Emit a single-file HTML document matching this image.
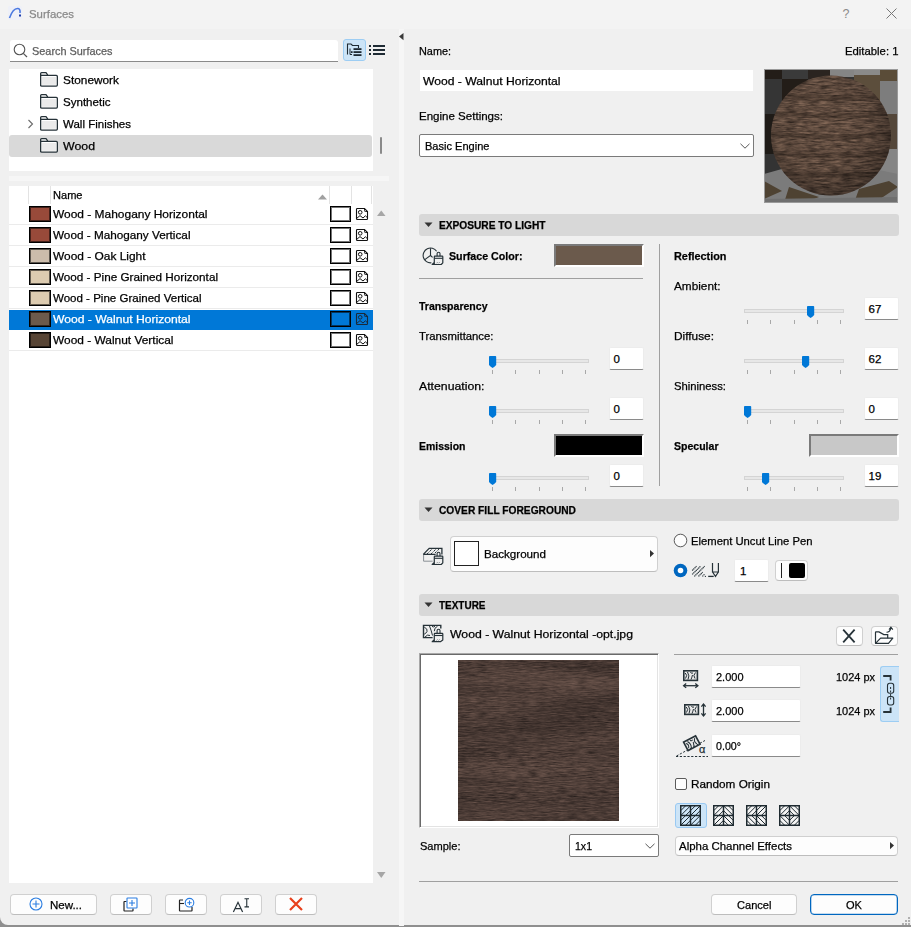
<!DOCTYPE html><html><head><meta charset="utf-8"><style>
*{box-sizing:border-box;margin:0;padding:0}
html,body{width:911px;height:927px;overflow:hidden;background:#8f8f8f}
body{position:relative;font-family:"Liberation Sans",sans-serif;font-size:11.5px;color:#000}
.a{position:absolute}
.t{position:absolute;white-space:nowrap;line-height:14px;height:14px;-webkit-text-stroke:0.25px currentColor}
.tb{-webkit-text-stroke:0.1px currentColor}
.fld{position:absolute;background:#fff;border:1px solid #ececec;border-bottom:1px solid #8a8a8a;border-radius:2px}
.sw{position:absolute;border-top:2px solid #7a7a7a;border-left:2px solid #7a7a7a;border-bottom:2px solid #fff;border-right:2px solid #fff}
.btn{position:absolute;background:#fdfdfd;border:1px solid #d0d0d0;border-bottom-color:#bdbdbd;border-radius:4px}
.track{position:absolute;height:4px;background:#e7e7e7;border:1px solid #d4d4d4}
.tick{position:absolute;width:1px;height:3px;background:#a8a8a8}
svg{position:absolute;overflow:visible}
</style></head><body>
<div class="a" style="left:0;top:0;width:911px;height:925px;background:#f0f0f0;border-radius:0 0 0 8px"></div>
<div class="a" style="left:0;top:0;width:911px;height:29px;background:#f3f3f3"></div>
<div class="a" style="left:8px;top:6px;width:14px;height:14px;background:#eef0f8;border-radius:2px"></div>
<svg style="left:8px;top:6px" width="14" height="14"><path d="M1.5 12 Q5 2 10 2.5 Q12.5 3 12 7" fill="none" stroke="#4a78e0" stroke-width="1.6"/><rect x="11" y="8.5" width="2" height="2" fill="#1f3fa8"/></svg>
<div class="t" style="left:28.50px;top:6.62px;font-size:11.5px;font-weight:normal;color:#8a8a8a;transform:scaleX(0.9914);transform-origin:0 0;">Surfaces</div>
<div class="t" style="left:842.50px;top:6.67px;font-size:12.5px;font-weight:normal;color:#8a8a8a;-webkit-text-stroke:0">?</div>
<svg style="left:886px;top:8px" width="11" height="11"><path d="M0.5 0.5 L10.5 10.5 M10.5 0.5 L0.5 10.5" stroke="#777" stroke-width="1"/></svg>
<div class="a" style="left:10px;top:40px;width:328px;height:22px;background:#fff;border-radius:3px 3px 0 0;border-bottom:1px solid #8a8a8a"></div>
<svg style="left:13px;top:43px" width="16" height="16"><circle cx="6.5" cy="6.5" r="5.3" fill="none" stroke="#555" stroke-width="1.1"/><path d="M10.3 10.3 L14 14" stroke="#555" stroke-width="1.2"/></svg>
<div class="t" style="left:31.50px;top:44.02px;font-size:11.5px;font-weight:normal;color:#5d5d5d;transform:scaleX(0.9469);transform-origin:0 0;">Search Surfaces</div>
<div class="a" style="left:343px;top:39px;width:23px;height:22px;background:#cce4f7;border:1px solid #9dcdf3;border-radius:3px"></div>
<svg style="left:346px;top:42px" width="18" height="16"><path d="M1.5 12.5 V2 H5 L6.5 3.5 H12.5 V6" fill="none" stroke="#1e2a33" stroke-width="1.1"/><path d="M4 6.5 V12.5 H6" fill="none" stroke="#1e2a33" stroke-width="1"/><rect x="7.5" y="6.2" width="8" height="1.8" fill="#1e2a33"/><rect x="7.5" y="9.2" width="8" height="1.8" fill="#1e2a33"/><rect x="7.5" y="12.2" width="8" height="1.8" fill="#1e2a33"/><rect x="5" y="9.2" width="1.6" height="1.8" fill="#1e2a33"/></svg>
<svg style="left:369px;top:44px" width="17" height="12"><rect x="0" y="1" width="2" height="2" fill="#1e2a33"/><rect x="4" y="1" width="12" height="2" fill="#1e2a33"/><rect x="0" y="5" width="2" height="2" fill="#1e2a33"/><rect x="4" y="5" width="12" height="2" fill="#1e2a33"/><rect x="0" y="9" width="2" height="2" fill="#1e2a33"/><rect x="4" y="9" width="12" height="2" fill="#1e2a33"/></svg>
<div class="a" style="left:9px;top:69px;width:364px;height:102px;background:#fff"></div>
<div class="a" style="left:9px;top:135px;width:363px;height:22px;background:#d9d9d9;border-radius:3px"></div>
<svg style="left:40px;top:72px" width="19" height="16"><path d="M0.65 14.15 V1.6 Q0.65 0.65 1.6 0.65 H6 L8 3.35 H16.3 Q17.35 3.35 17.35 4.4 V13.1 Q17.35 14.15 16.3 14.15 H1.6 Q0.65 14.15 0.65 13.1 Z" fill="#fff" stroke="#263238" stroke-width="1.3"/><path d="M0.65 3.35 H8" stroke="#263238" stroke-width="1.3"/><rect x="2" y="5" width="14" height="7.8" fill="#eaeaea"/></svg>
<div class="t" style="left:63.00px;top:73.32px;font-size:11.5px;font-weight:normal;color:#000;transform:scaleX(1.0305);transform-origin:0 0;">Stonework</div>
<svg style="left:40px;top:94px" width="19" height="16"><path d="M0.65 14.15 V1.6 Q0.65 0.65 1.6 0.65 H6 L8 3.35 H16.3 Q17.35 3.35 17.35 4.4 V13.1 Q17.35 14.15 16.3 14.15 H1.6 Q0.65 14.15 0.65 13.1 Z" fill="#fff" stroke="#263238" stroke-width="1.3"/><path d="M0.65 3.35 H8" stroke="#263238" stroke-width="1.3"/><rect x="2" y="5" width="14" height="7.8" fill="#eaeaea"/></svg>
<div class="t" style="left:63.00px;top:95.32px;font-size:11.5px;font-weight:normal;color:#000;transform:scaleX(1.0040);transform-origin:0 0;">Synthetic</div>
<svg style="left:40px;top:116px" width="19" height="16"><path d="M0.65 14.15 V1.6 Q0.65 0.65 1.6 0.65 H6 L8 3.35 H16.3 Q17.35 3.35 17.35 4.4 V13.1 Q17.35 14.15 16.3 14.15 H1.6 Q0.65 14.15 0.65 13.1 Z" fill="#fff" stroke="#263238" stroke-width="1.3"/><path d="M0.65 3.35 H8" stroke="#263238" stroke-width="1.3"/><rect x="2" y="5" width="14" height="7.8" fill="#eaeaea"/></svg>
<div class="t" style="left:63.00px;top:117.32px;font-size:11.5px;font-weight:normal;color:#000;transform:scaleX(1.0007);transform-origin:0 0;">Wall Finishes</div>
<svg style="left:40px;top:138px" width="19" height="16"><path d="M0.65 14.15 V1.6 Q0.65 0.65 1.6 0.65 H6 L8 3.35 H16.3 Q17.35 3.35 17.35 4.4 V13.1 Q17.35 14.15 16.3 14.15 H1.6 Q0.65 14.15 0.65 13.1 Z" fill="#fff" stroke="#263238" stroke-width="1.3"/><path d="M0.65 3.35 H8" stroke="#263238" stroke-width="1.3"/><rect x="2" y="5" width="14" height="7.8" fill="#eaeaea"/></svg>
<div class="t" style="left:63.00px;top:139.32px;font-size:11.5px;font-weight:normal;color:#000;transform:scaleX(1.0723);transform-origin:0 0;">Wood</div>
<svg style="left:27px;top:119px" width="8" height="10"><path d="M1.5 1 L5.5 5 L1.5 9" fill="none" stroke="#6a6a6a" stroke-width="1.1"/></svg>
<div class="a" style="left:380px;top:137px;width:2px;height:17px;background:#8a8a8a;border-radius:1px"></div>
<div class="a" style="left:9px;top:176px;width:380px;height:5px;background:#f6f6f6"></div>
<div class="a" style="left:9px;top:186px;width:364px;height:697px;background:#fff"></div>
<div class="a" style="left:28px;top:186px;width:1px;height:18px;background:#e3e3e3"></div>
<div class="a" style="left:50px;top:186px;width:1px;height:18px;background:#e3e3e3"></div>
<div class="a" style="left:329px;top:186px;width:1px;height:18px;background:#e3e3e3"></div>
<div class="a" style="left:351px;top:186px;width:1px;height:18px;background:#e3e3e3"></div>
<div class="a" style="left:371px;top:186px;width:1px;height:18px;background:#e3e3e3"></div>
<div class="t" style="left:53.00px;top:188.02px;font-size:11.5px;font-weight:normal;color:#000;transform:scaleX(0.9613);transform-origin:0 0;">Name</div>
<svg style="left:318px;top:194px" width="10" height="6"><path d="M0 5.5 L4.5 0.5 L9 5.5 Z" fill="#a0a0a0"/></svg>
<div class="a" style="left:9px;top:224px;width:364px;height:1px;background:#ebebeb"></div>
<div class="a" style="left:29px;top:206px;width:22px;height:16px;background:#984a3a;border:1px solid #000;box-shadow:inset 0 0 0 1px rgba(0,0,0,0.55)"></div>
<div class="t" style="left:53.00px;top:207.32px;font-size:11.5px;font-weight:normal;color:#000;transform:scaleX(1.0388);transform-origin:0 0;">Wood - Mahogany Horizontal</div>
<div class="a" style="left:330px;top:206px;width:21px;height:16px;background:#fff;border:1px solid #000;box-shadow:inset 0 0 0 1px rgba(0,0,0,0.55)"></div>
<svg style="left:355px;top:207px" width="15" height="15"><path d="M1.5 2.3 Q1.5 1.5 2.3 1.5 H9.5 L12.5 4.5 V11.7 Q12.5 12.5 11.7 12.5 H2.3 Q1.5 12.5 1.5 11.7 Z" fill="none" stroke="#111" stroke-width="1.1"/><path d="M9.5 1.5 V3.7 Q9.5 4.5 10.3 4.5 H12.5" fill="none" stroke="#111" stroke-width="0.9"/><circle cx="5.2" cy="5.3" r="1.8" fill="none" stroke="#111" stroke-width="1"/><path d="M1.8 11.3 L5 8.6 L8 11 L10.4 8.8 L12.3 10.6" fill="none" stroke="#111" stroke-width="1"/></svg>
<div class="a" style="left:9px;top:245px;width:364px;height:1px;background:#ebebeb"></div>
<div class="a" style="left:29px;top:227px;width:22px;height:16px;background:#984a3a;border:1px solid #000;box-shadow:inset 0 0 0 1px rgba(0,0,0,0.55)"></div>
<div class="t" style="left:53.00px;top:228.32px;font-size:11.5px;font-weight:normal;color:#000;transform:scaleX(1.0210);transform-origin:0 0;">Wood - Mahogany Vertical</div>
<div class="a" style="left:330px;top:227px;width:21px;height:16px;background:#fff;border:1px solid #000;box-shadow:inset 0 0 0 1px rgba(0,0,0,0.55)"></div>
<svg style="left:355px;top:228px" width="15" height="15"><path d="M1.5 2.3 Q1.5 1.5 2.3 1.5 H9.5 L12.5 4.5 V11.7 Q12.5 12.5 11.7 12.5 H2.3 Q1.5 12.5 1.5 11.7 Z" fill="none" stroke="#111" stroke-width="1.1"/><path d="M9.5 1.5 V3.7 Q9.5 4.5 10.3 4.5 H12.5" fill="none" stroke="#111" stroke-width="0.9"/><circle cx="5.2" cy="5.3" r="1.8" fill="none" stroke="#111" stroke-width="1"/><path d="M1.8 11.3 L5 8.6 L8 11 L10.4 8.8 L12.3 10.6" fill="none" stroke="#111" stroke-width="1"/></svg>
<div class="a" style="left:9px;top:266px;width:364px;height:1px;background:#ebebeb"></div>
<div class="a" style="left:29px;top:248px;width:22px;height:16px;background:#cbbcab;border:1px solid #000;box-shadow:inset 0 0 0 1px rgba(0,0,0,0.55)"></div>
<div class="t" style="left:53.00px;top:249.32px;font-size:11.5px;font-weight:normal;color:#000;transform:scaleX(1.0361);transform-origin:0 0;">Wood - Oak Light</div>
<div class="a" style="left:330px;top:248px;width:21px;height:16px;background:#fff;border:1px solid #000;box-shadow:inset 0 0 0 1px rgba(0,0,0,0.55)"></div>
<svg style="left:355px;top:249px" width="15" height="15"><path d="M1.5 2.3 Q1.5 1.5 2.3 1.5 H9.5 L12.5 4.5 V11.7 Q12.5 12.5 11.7 12.5 H2.3 Q1.5 12.5 1.5 11.7 Z" fill="none" stroke="#111" stroke-width="1.1"/><path d="M9.5 1.5 V3.7 Q9.5 4.5 10.3 4.5 H12.5" fill="none" stroke="#111" stroke-width="0.9"/><circle cx="5.2" cy="5.3" r="1.8" fill="none" stroke="#111" stroke-width="1"/><path d="M1.8 11.3 L5 8.6 L8 11 L10.4 8.8 L12.3 10.6" fill="none" stroke="#111" stroke-width="1"/></svg>
<div class="a" style="left:9px;top:287px;width:364px;height:1px;background:#ebebeb"></div>
<div class="a" style="left:29px;top:269px;width:22px;height:16px;background:#dccbb0;border:1px solid #000;box-shadow:inset 0 0 0 1px rgba(0,0,0,0.55)"></div>
<div class="t" style="left:53.00px;top:270.32px;font-size:11.5px;font-weight:normal;color:#000;transform:scaleX(1.0175);transform-origin:0 0;">Wood - Pine Grained Horizontal</div>
<div class="a" style="left:330px;top:269px;width:21px;height:16px;background:#fff;border:1px solid #000;box-shadow:inset 0 0 0 1px rgba(0,0,0,0.55)"></div>
<svg style="left:355px;top:270px" width="15" height="15"><path d="M1.5 2.3 Q1.5 1.5 2.3 1.5 H9.5 L12.5 4.5 V11.7 Q12.5 12.5 11.7 12.5 H2.3 Q1.5 12.5 1.5 11.7 Z" fill="none" stroke="#111" stroke-width="1.1"/><path d="M9.5 1.5 V3.7 Q9.5 4.5 10.3 4.5 H12.5" fill="none" stroke="#111" stroke-width="0.9"/><circle cx="5.2" cy="5.3" r="1.8" fill="none" stroke="#111" stroke-width="1"/><path d="M1.8 11.3 L5 8.6 L8 11 L10.4 8.8 L12.3 10.6" fill="none" stroke="#111" stroke-width="1"/></svg>
<div class="a" style="left:9px;top:308px;width:364px;height:1px;background:#ebebeb"></div>
<div class="a" style="left:29px;top:290px;width:22px;height:16px;background:#dccbb0;border:1px solid #000;box-shadow:inset 0 0 0 1px rgba(0,0,0,0.55)"></div>
<div class="t" style="left:53.00px;top:291.32px;font-size:11.5px;font-weight:normal;color:#000;transform:scaleX(1.0027);transform-origin:0 0;">Wood - Pine Grained Vertical</div>
<div class="a" style="left:330px;top:290px;width:21px;height:16px;background:#fff;border:1px solid #000;box-shadow:inset 0 0 0 1px rgba(0,0,0,0.55)"></div>
<svg style="left:355px;top:291px" width="15" height="15"><path d="M1.5 2.3 Q1.5 1.5 2.3 1.5 H9.5 L12.5 4.5 V11.7 Q12.5 12.5 11.7 12.5 H2.3 Q1.5 12.5 1.5 11.7 Z" fill="none" stroke="#111" stroke-width="1.1"/><path d="M9.5 1.5 V3.7 Q9.5 4.5 10.3 4.5 H12.5" fill="none" stroke="#111" stroke-width="0.9"/><circle cx="5.2" cy="5.3" r="1.8" fill="none" stroke="#111" stroke-width="1"/><path d="M1.8 11.3 L5 8.6 L8 11 L10.4 8.8 L12.3 10.6" fill="none" stroke="#111" stroke-width="1"/></svg>
<div class="a" style="left:9px;top:310px;width:364px;height:20px;background:#0078d7"></div>
<div class="a" style="left:29px;top:311px;width:22px;height:16px;background:#6b5a4c;border:1px solid #000;box-shadow:inset 0 0 0 1px rgba(0,0,0,0.55)"></div>
<div class="t" style="left:53.00px;top:312.32px;font-size:11.5px;font-weight:normal;color:#fff;transform:scaleX(1.0545);transform-origin:0 0;">Wood - Walnut Horizontal</div>
<div class="a" style="left:330px;top:311px;width:21px;height:16px;background:#0078d7;border:1px solid #000;box-shadow:inset 0 0 0 1px rgba(0,0,0,0.55)"></div>
<svg style="left:355px;top:312px" width="15" height="15"><path d="M1.5 2.3 Q1.5 1.5 2.3 1.5 H9.5 L12.5 4.5 V11.7 Q12.5 12.5 11.7 12.5 H2.3 Q1.5 12.5 1.5 11.7 Z" fill="none" stroke="#1a2a3a" stroke-width="1.1"/><path d="M9.5 1.5 V3.7 Q9.5 4.5 10.3 4.5 H12.5" fill="none" stroke="#1a2a3a" stroke-width="0.9"/><circle cx="5.2" cy="5.3" r="1.8" fill="none" stroke="#1a2a3a" stroke-width="1"/><path d="M1.8 11.3 L5 8.6 L8 11 L10.4 8.8 L12.3 10.6" fill="none" stroke="#1a2a3a" stroke-width="1"/></svg>
<div class="a" style="left:9px;top:350px;width:364px;height:1px;background:#ebebeb"></div>
<div class="a" style="left:29px;top:332px;width:22px;height:16px;background:#574434;border:1px solid #000;box-shadow:inset 0 0 0 1px rgba(0,0,0,0.55)"></div>
<div class="t" style="left:53.00px;top:333.32px;font-size:11.5px;font-weight:normal;color:#000;transform:scaleX(1.0359);transform-origin:0 0;">Wood - Walnut Vertical</div>
<div class="a" style="left:330px;top:332px;width:21px;height:16px;background:#fff;border:1px solid #000;box-shadow:inset 0 0 0 1px rgba(0,0,0,0.55)"></div>
<svg style="left:355px;top:333px" width="15" height="15"><path d="M1.5 2.3 Q1.5 1.5 2.3 1.5 H9.5 L12.5 4.5 V11.7 Q12.5 12.5 11.7 12.5 H2.3 Q1.5 12.5 1.5 11.7 Z" fill="none" stroke="#111" stroke-width="1.1"/><path d="M9.5 1.5 V3.7 Q9.5 4.5 10.3 4.5 H12.5" fill="none" stroke="#111" stroke-width="0.9"/><circle cx="5.2" cy="5.3" r="1.8" fill="none" stroke="#111" stroke-width="1"/><path d="M1.8 11.3 L5 8.6 L8 11 L10.4 8.8 L12.3 10.6" fill="none" stroke="#111" stroke-width="1"/></svg>
<svg style="left:377px;top:210px" width="9" height="7"><path d="M0 6 L4.25 0.5 L8.5 6 Z" fill="#a6a6a6"/></svg>
<svg style="left:377px;top:872px" width="9" height="7"><path d="M0 0 L4.25 6 L8.5 0 Z" fill="#a6a6a6"/></svg>
<div class="btn" style="left:10px;top:894px;width:87px;height:21px"></div>
<svg style="left:29px;top:897px" width="15" height="15"><circle cx="7" cy="7" r="6" fill="none" stroke="#2a7de1" stroke-width="1.1"/><path d="M7 3.5 V10.5 M3.5 7 H10.5" stroke="#2a7de1" stroke-width="1.1"/></svg>
<div class="t" style="left:49.50px;top:898.02px;font-size:11.5px;font-weight:normal;color:#000;transform:scaleX(1.0010);transform-origin:0 0;">New...</div>
<div class="btn" style="left:110px;top:894px;width:42px;height:21px"></div>
<div class="btn" style="left:165px;top:894px;width:42px;height:21px"></div>
<div class="btn" style="left:220px;top:894px;width:42px;height:21px"></div>
<div class="btn" style="left:275px;top:894px;width:42px;height:21px"></div>
<svg style="left:123px;top:897px" width="16" height="16"><path d="M3.5 4.5 H1.5 Q1 4.5 1 5 V13.5 Q1 14 1.5 14 H9.5 Q10 14 10 13.5 V11.5" fill="none" stroke="#222" stroke-width="1.2"/><rect x="4" y="1" width="10" height="10" rx="0.6" fill="#fff" stroke="#2a7de1" stroke-width="1.1"/><path d="M9 3 V9 M6 6 H12" stroke="#2a7de1" stroke-width="1.1"/></svg>
<svg style="left:178px;top:897px" width="18" height="16"><path d="M5 3 H2 Q1.5 3 1.5 3.5 V13.5 Q1.5 14 2 14 H13.5 Q14 14 14 13.5 V10" fill="none" stroke="#222" stroke-width="1.2"/><path d="M1.5 6.5 H6" stroke="#222" stroke-width="1.1"/><circle cx="11.5" cy="5.7" r="4.3" fill="#fff" stroke="#2a7de1" stroke-width="1.1"/><path d="M11.5 3.5 V7.9 M9.3 5.7 H13.7" stroke="#2a7de1" stroke-width="1.1"/></svg>
<svg style="left:230px;top:896px" width="24" height="18"><path d="M3.4 16 L8 6.3 L12.6 16 M5.1 12.6 H10.9" fill="none" stroke="#263238" stroke-width="1.2"/><path d="M14.5 2.8 H19 M16.75 2.8 V10.9 M14.5 10.9 H19" fill="none" stroke="#263238" stroke-width="1.1"/></svg>
<svg style="left:289px;top:897px" width="14" height="14"><path d="M1 1 L13 13 M13 1 L1 13" stroke="#e8401c" stroke-width="2.2"/></svg>
<div class="a" style="left:399px;top:29px;width:5px;height:897px;background:#f6f6f6"></div>
<svg style="left:399px;top:33px" width="5" height="8"><path d="M4.5 0 L0 3.6 L4.5 7.2 Z" fill="#3a3a3a"/></svg>
<div class="t" style="left:419.00px;top:44.02px;font-size:11.5px;font-weight:normal;color:#000;transform:scaleX(0.9446);transform-origin:0 0;">Name:</div>
<div class="t" style="left:845.00px;top:44.02px;font-size:11.5px;font-weight:normal;color:#000;transform:scaleX(0.9842);transform-origin:0 0;">Editable: 1</div>
<div class="a" style="left:420px;top:70px;width:333px;height:21px;background:#fff"></div>
<div class="t" style="left:423.00px;top:74.02px;font-size:11.5px;font-weight:normal;color:#000;transform:scaleX(1.0545);transform-origin:0 0;">Wood - Walnut Horizontal</div>
<div class="t" style="left:419.00px;top:109.32px;font-size:11.5px;font-weight:normal;color:#000;transform:scaleX(1.0028);transform-origin:0 0;">Engine Settings:</div>
<div class="a" style="left:419px;top:134px;width:335px;height:23px;background:#fff;border:1px solid #7a7a7a;border-radius:2px"></div>
<div class="t" style="left:425.00px;top:139.02px;font-size:11.5px;font-weight:normal;color:#000;transform:scaleX(0.9609);transform-origin:0 0;">Basic Engine</div>
<svg style="left:740px;top:143px" width="11" height="7"><path d="M0.5 0.8 L5 5.2 L9.5 0.8" fill="none" stroke="#444" stroke-width="0.9"/></svg>
<svg style="left:764px;top:69px;overflow:hidden" width="134" height="134">
<defs>
<filter id="sgrain" x="0" y="0" width="100%" height="100%" color-interpolation-filters="sRGB">
<feTurbulence type="fractalNoise" baseFrequency="0.09 0.55" numOctaves="3" seed="4"/>
<feColorMatrix type="matrix" values="0.46 0 0 0 0.15  0.37 0 0 0 0.115  0.31 0 0 0 0.095  0 0 0 0 1"/>
</filter>
<radialGradient id="shade" cx="0.42" cy="0.4" r="0.65">
<stop offset="0" stop-color="#000" stop-opacity="0"/>
<stop offset="0.6" stop-color="#000" stop-opacity="0.08"/>
<stop offset="1" stop-color="#000" stop-opacity="0.4"/>
</radialGradient>
<clipPath id="sc"><circle cx="67" cy="66.5" r="60"/></clipPath>
</defs>
<rect width="134" height="134" fill="#353535"/>
<rect x="0" y="0" width="18" height="10" fill="#231d18"/>
<rect x="18" y="0" width="26" height="10" fill="#3a3a3a"/>
<rect x="44" y="0" width="22" height="10" fill="#2a2420"/>
<rect x="66" y="0" width="24" height="8" fill="#858585"/>
<rect x="90" y="0" width="26" height="6" fill="#8a8a8a"/>
<rect x="116" y="0" width="18" height="12" fill="#5a4c38"/>
<rect x="0" y="10" width="18" height="35" fill="#353535"/>
<rect x="18" y="10" width="26" height="35" fill="#231d18"/>
<rect x="90" y="6" width="26" height="39" fill="#5c4e3c"/>
<rect x="116" y="12" width="18" height="33" fill="#7d7d7d"/>
<rect x="0" y="45" width="18" height="40" fill="#1f1b17"/>
<rect x="108" y="45" width="26" height="35" fill="#54473a"/>
<rect x="0" y="85" width="18" height="25" fill="#333"/>
<rect x="108" y="80" width="26" height="30" fill="#858585"/>
<path d="M0 105 L25 98 L60 110 L110 100 L134 105 L134 134 L0 134 Z" fill="#7b7b7b"/>
<path d="M0 112 L18 122 L0 130 Z" fill="#4e4232"/>
<path d="M25 118 L55 128 L40 134 L20 134 Z" fill="#4e4232"/>
<path d="M95 120 L125 112 L134 118 L110 134 L90 134 Z" fill="#4e4232"/>
<path d="M0 130 L134 128 L134 134 L0 134 Z" fill="#6f6f6f"/>
<g clip-path="url(#sc)">
<rect x="7" y="6" width="120" height="121" filter="url(#sgrain)"/>
<path d="M5 26 Q67 32 129 26 M5 44 Q67 50 129 44 M5 65 Q67 71 129 65 M5 84 Q67 89 129 84 M5 104 Q67 108 129 104" fill="none" stroke="#2a201c" stroke-width="5" opacity="0.3"/>
<rect x="7" y="6" width="120" height="121" fill="url(#shade)"/>
</g>
<rect x="0.5" y="0.5" width="133" height="133" fill="none" stroke="#9a9a9a" stroke-width="1"/>
</svg>
<div class="a" style="left:419px;top:214px;width:480px;height:22px;background:#d8d8d8;border-radius:3px"></div>
<svg style="left:424px;top:222px" width="9" height="6"><path d="M0.5 0.5 L8.5 0.5 L4.5 5 Z" fill="#333"/></svg>
<div class="t" style="left:439.00px;top:218.16px;font-size:10.5px;font-weight:bold;color:#000;transform:scaleX(0.9675);transform-origin:0 0;">EXPOSURE TO LIGHT</div>
<svg style="left:418px;top:240px" width="28" height="28"><path d="M18.6 11.2 A7.4 7.4 0 1 0 13.4 22.8" fill="none" stroke="#263238" stroke-width="1.1"/><path d="M12.5 8.2 V15.5 L6.8 19.6 M12.5 15.5 L14.6 17.4" fill="none" stroke="#263238" stroke-width="1.1"/><path d="M19.1 16.2 V13.6 Q19.1 12.2 20.55 12.2 Q22 12.2 22 13.6 V16.2" fill="#f0f0f0" stroke="#263238" stroke-width="1.1"/><path d="M16.3 24.4 V16.8 Q16.3 16.2 16.9 16.2 H24.2 Q24.8 16.2 24.8 16.8 V22.8 L23.2 24.5 H14.2 L16.3 22.4" fill="#f0f0f0" stroke="#263238" stroke-width="1.2" stroke-linejoin="round"/><path d="M16.3 18.3 H24.8" stroke="#263238" stroke-width="1.1"/><path d="M18.6 23.2 l0.8 -0.8 M20.6 23.2 l0.8 -0.8" stroke="#263238" stroke-width="0.8"/></svg>
<div class="t" style="left:449.00px;top:249.32px;font-size:11.5px;font-weight:bold;color:#000;transform:scaleX(0.9274);transform-origin:0 0;">Surface Color:</div>
<div class="sw" style="left:554px;top:244px;width:90px;height:23px;background:#6b5a4c"></div>
<div class="a" style="left:419px;top:278px;width:224px;height:1px;background:#a0a0a0"></div>
<div class="a" style="left:659px;top:244px;width:1px;height:242px;background:#a0a0a0"></div>
<div class="t" style="left:419.00px;top:298.62px;font-size:11.5px;font-weight:bold;color:#000;transform:scaleX(0.9158);transform-origin:0 0;">Transparency</div>
<div class="t" style="left:419.00px;top:329.02px;font-size:11.5px;font-weight:normal;color:#000;transform:scaleX(0.9849);transform-origin:0 0;">Transmittance:</div>
<div class="track" style="left:489px;top:359px;width:100px"></div>
<div class="tick" style="left:492px;top:370px;height:4px"></div>
<div class="tick" style="left:515px;top:370px;height:4px"></div>
<div class="tick" style="left:539px;top:370px;height:4px"></div>
<div class="tick" style="left:562px;top:370px;height:4px"></div>
<div class="tick" style="left:585px;top:370px;height:4px"></div>
<svg style="left:489.0px;top:356px" width="8" height="13"><path d="M0 0.8 Q0 0 0.8 0 H6.4 Q7.2 0 7.2 0.8 V9 Q5.5 11.2 3.6 12 Q1.7 11.2 0 9 Z" fill="#0078d7"/></svg>
<div class="fld" style="left:609px;top:347px;width:35px;height:23px"></div>
<div class="t" style="left:613.50px;top:351.82px;font-size:11.5px;font-weight:normal;color:#000;">0</div>
<div class="t" style="left:419.00px;top:379.02px;font-size:11.5px;font-weight:normal;color:#000;transform:scaleX(1.0669);transform-origin:0 0;">Attenuation:</div>
<div class="track" style="left:489px;top:409px;width:100px"></div>
<div class="tick" style="left:492px;top:420px;height:4px"></div>
<div class="tick" style="left:515px;top:420px;height:4px"></div>
<div class="tick" style="left:539px;top:420px;height:4px"></div>
<div class="tick" style="left:562px;top:420px;height:4px"></div>
<div class="tick" style="left:585px;top:420px;height:4px"></div>
<svg style="left:489.0px;top:406px" width="8" height="13"><path d="M0 0.8 Q0 0 0.8 0 H6.4 Q7.2 0 7.2 0.8 V9 Q5.5 11.2 3.6 12 Q1.7 11.2 0 9 Z" fill="#0078d7"/></svg>
<div class="fld" style="left:609px;top:397px;width:35px;height:23px"></div>
<div class="t" style="left:613.50px;top:401.82px;font-size:11.5px;font-weight:normal;color:#000;">0</div>
<div class="t" style="left:419.00px;top:438.52px;font-size:11.5px;font-weight:bold;color:#000;transform:scaleX(0.9093);transform-origin:0 0;">Emission</div>
<div class="sw" style="left:554px;top:434px;width:90px;height:23px;background:#000"></div>
<div class="track" style="left:489px;top:476px;width:100px"></div>
<div class="tick" style="left:492px;top:487px;height:4px"></div>
<div class="tick" style="left:515px;top:487px;height:4px"></div>
<div class="tick" style="left:539px;top:487px;height:4px"></div>
<div class="tick" style="left:562px;top:487px;height:4px"></div>
<div class="tick" style="left:585px;top:487px;height:4px"></div>
<svg style="left:489.0px;top:473px" width="8" height="13"><path d="M0 0.8 Q0 0 0.8 0 H6.4 Q7.2 0 7.2 0.8 V9 Q5.5 11.2 3.6 12 Q1.7 11.2 0 9 Z" fill="#0078d7"/></svg>
<div class="fld" style="left:609px;top:464px;width:35px;height:23px"></div>
<div class="t" style="left:613.50px;top:468.82px;font-size:11.5px;font-weight:normal;color:#000;">0</div>
<div class="t" style="left:674.00px;top:249.32px;font-size:11.5px;font-weight:bold;color:#000;transform:scaleX(0.9444);transform-origin:0 0;">Reflection</div>
<div class="t" style="left:674.00px;top:279.32px;font-size:11.5px;font-weight:normal;color:#000;transform:scaleX(1.0244);transform-origin:0 0;">Ambient:</div>
<div class="track" style="left:744px;top:309px;width:100px"></div>
<div class="tick" style="left:747px;top:320px;height:4px"></div>
<div class="tick" style="left:770px;top:320px;height:4px"></div>
<div class="tick" style="left:794px;top:320px;height:4px"></div>
<div class="tick" style="left:817px;top:320px;height:4px"></div>
<div class="tick" style="left:840px;top:320px;height:4px"></div>
<svg style="left:806.5px;top:306px" width="8" height="13"><path d="M0 0.8 Q0 0 0.8 0 H6.4 Q7.2 0 7.2 0.8 V9 Q5.5 11.2 3.6 12 Q1.7 11.2 0 9 Z" fill="#0078d7"/></svg>
<div class="fld" style="left:864px;top:297px;width:35px;height:23px"></div>
<div class="t" style="left:868.50px;top:301.82px;font-size:11.5px;font-weight:normal;color:#000;">67</div>
<div class="t" style="left:674.00px;top:328.72px;font-size:11.5px;font-weight:normal;color:#000;transform:scaleX(1.0314);transform-origin:0 0;">Diffuse:</div>
<div class="track" style="left:744px;top:359px;width:100px"></div>
<div class="tick" style="left:747px;top:370px;height:4px"></div>
<div class="tick" style="left:770px;top:370px;height:4px"></div>
<div class="tick" style="left:794px;top:370px;height:4px"></div>
<div class="tick" style="left:817px;top:370px;height:4px"></div>
<div class="tick" style="left:840px;top:370px;height:4px"></div>
<svg style="left:801.8px;top:356px" width="8" height="13"><path d="M0 0.8 Q0 0 0.8 0 H6.4 Q7.2 0 7.2 0.8 V9 Q5.5 11.2 3.6 12 Q1.7 11.2 0 9 Z" fill="#0078d7"/></svg>
<div class="fld" style="left:864px;top:347px;width:35px;height:23px"></div>
<div class="t" style="left:868.50px;top:351.82px;font-size:11.5px;font-weight:normal;color:#000;">62</div>
<div class="t" style="left:674.00px;top:378.72px;font-size:11.5px;font-weight:normal;color:#000;transform:scaleX(0.9800);transform-origin:0 0;">Shininess:</div>
<div class="track" style="left:744px;top:409px;width:100px"></div>
<div class="tick" style="left:747px;top:420px;height:4px"></div>
<div class="tick" style="left:770px;top:420px;height:4px"></div>
<div class="tick" style="left:794px;top:420px;height:4px"></div>
<div class="tick" style="left:817px;top:420px;height:4px"></div>
<div class="tick" style="left:840px;top:420px;height:4px"></div>
<svg style="left:744.0px;top:406px" width="8" height="13"><path d="M0 0.8 Q0 0 0.8 0 H6.4 Q7.2 0 7.2 0.8 V9 Q5.5 11.2 3.6 12 Q1.7 11.2 0 9 Z" fill="#0078d7"/></svg>
<div class="fld" style="left:864px;top:397px;width:35px;height:23px"></div>
<div class="t" style="left:868.50px;top:401.82px;font-size:11.5px;font-weight:normal;color:#000;">0</div>
<div class="t" style="left:674.00px;top:438.52px;font-size:11.5px;font-weight:bold;color:#000;transform:scaleX(0.9161);transform-origin:0 0;">Specular</div>
<div class="sw" style="left:809px;top:434px;width:90px;height:23px;background:#c8c8c8"></div>
<div class="track" style="left:744px;top:476px;width:100px"></div>
<div class="tick" style="left:747px;top:487px;height:4px"></div>
<div class="tick" style="left:770px;top:487px;height:4px"></div>
<div class="tick" style="left:794px;top:487px;height:4px"></div>
<div class="tick" style="left:817px;top:487px;height:4px"></div>
<div class="tick" style="left:840px;top:487px;height:4px"></div>
<svg style="left:761.7px;top:473px" width="8" height="13"><path d="M0 0.8 Q0 0 0.8 0 H6.4 Q7.2 0 7.2 0.8 V9 Q5.5 11.2 3.6 12 Q1.7 11.2 0 9 Z" fill="#0078d7"/></svg>
<div class="fld" style="left:864px;top:464px;width:35px;height:23px"></div>
<div class="t" style="left:868.50px;top:468.82px;font-size:11.5px;font-weight:normal;color:#000;">19</div>
<div class="a" style="left:419px;top:499px;width:480px;height:22px;background:#d8d8d8;border-radius:3px"></div>
<svg style="left:424px;top:507px" width="9" height="6"><path d="M0.5 0.5 L8.5 0.5 L4.5 5 Z" fill="#333"/></svg>
<div class="t" style="left:439.00px;top:503.16px;font-size:10.5px;font-weight:bold;color:#000;transform:scaleX(0.9717);transform-origin:0 0;">COVER FILL FOREGROUND</div>
<svg style="left:418px;top:540px" width="28" height="28"><path d="M5.6 21.2 V14.4 H14.6 M14.6 21.2 H5.6" fill="none" stroke="#8a9096" stroke-width="1"/><path d="M5.3 14.4 L11.2 8.4 H23.9 V14.6 M5.3 14.4 H17.6" fill="none" stroke="#263238" stroke-width="1.3"/><path d="M9 14 L14.5 8.6 M13 14 L18.5 8.6 M17 13 L21.5 8.6" stroke="#263238" stroke-width="1" stroke-dasharray="1.4 0.7"/><path d="M19.1 16.2 V13.6 Q19.1 12.2 20.55 12.2 Q22 12.2 22 13.6 V16.2" fill="#f0f0f0" stroke="#263238" stroke-width="1.1"/><path d="M16.3 24.4 V16.8 Q16.3 16.2 16.9 16.2 H24.2 Q24.8 16.2 24.8 16.8 V22.8 L23.2 24.5 H14.2 L16.3 22.4" fill="#f0f0f0" stroke="#263238" stroke-width="1.2" stroke-linejoin="round"/><path d="M16.3 18.3 H24.8" stroke="#263238" stroke-width="1.1"/><path d="M18.6 23.2 l0.8 -0.8 M20.6 23.2 l0.8 -0.8" stroke="#263238" stroke-width="0.8"/></svg>
<div class="btn" style="left:450px;top:536px;width:208px;height:36px"></div>
<div class="a" style="left:454px;top:541px;width:25px;height:25px;background:#fff;border:1px solid #222"></div>
<div class="t" style="left:483.50px;top:547.02px;font-size:11.5px;font-weight:normal;color:#000;transform:scaleX(1.0102);transform-origin:0 0;">Background</div>
<svg style="left:650px;top:550px" width="5" height="8"><path d="M0 0 L4 3.6 L0 7.2 Z" fill="#333"/></svg>
<svg style="left:673px;top:533px" width="15" height="15"><circle cx="7.5" cy="7.5" r="6.3" fill="#fdfdfd" stroke="#5a5a5a" stroke-width="1"/></svg>
<div class="t" style="left:690.50px;top:533.62px;font-size:11.5px;font-weight:normal;color:#000;transform:scaleX(0.9796);transform-origin:0 0;">Element Uncut Line Pen</div>
<svg style="left:673px;top:563px" width="15" height="15"><circle cx="7.5" cy="7.5" r="6.8" fill="#0067c0"/><circle cx="7.5" cy="7.5" r="2.8" fill="#fff"/></svg>
<svg style="left:688px;top:558px" width="36" height="24"><path d="M4.2 12.5 L8.5 8.3 M4.2 16.4 L12.5 8.3 M6.3 18.4 L16.6 8.3 M10.5 18.4 L14.6 14.2 M14.4 18.4 L16.6 16.2" stroke="#263238" stroke-width="1.2" stroke-dasharray="1.2 0.5"/><circle cx="17.4" cy="18.4" r="0.6" fill="#263238"/><path d="M20.2 18.4 H25.7" stroke="#263238" stroke-width="1.3"/><path d="M24.5 5 V14 H30.4 V5 M24.5 14 L27.5 18.4 L30.4 14" fill="none" stroke="#263238" stroke-width="1.2"/></svg>
<div class="fld" style="left:734px;top:559px;width:35px;height:23px"></div>
<div class="t" style="left:740.00px;top:564.02px;font-size:11.5px;font-weight:normal;color:#000;">1</div>
<div class="btn" style="left:775px;top:560px;width:33px;height:21px;border-radius:4px"></div>
<div class="a" style="left:781px;top:563px;width:1px;height:15px;background:#222"></div>
<div class="a" style="left:789px;top:563px;width:16px;height:15px;background:#000;border-radius:2px"></div>
<div class="a" style="left:419px;top:594px;width:480px;height:22px;background:#d8d8d8;border-radius:3px"></div>
<svg style="left:424px;top:602px" width="9" height="6"><path d="M0.5 0.5 L8.5 0.5 L4.5 5 Z" fill="#333"/></svg>
<div class="t" style="left:439.00px;top:598.16px;font-size:10.5px;font-weight:bold;color:#000;transform:scaleX(0.9487);transform-origin:0 0;">TEXTURE</div>
<svg style="left:418px;top:618px" width="28" height="28"><path d="M14.6 19.6 H5.5 V7.4 H22.8 V10.5" fill="none" stroke="#263238" stroke-width="1.4"/><path d="M6.2 9 Q10 11 9 13.5 Q8 15.5 6.2 16.2 M7 19 Q9.5 16 12 17.5 M11.5 8 Q13.5 13 14.5 17.5 M14 8.4 Q15.5 9.5 17 8.4 M19.5 8.2 Q16 10 16.3 13.2" fill="none" stroke="#263238" stroke-width="1"/><path d="M19.1 15.4 V12.6 Q19.1 11.2 20.55 11.2 Q22 11.2 22 12.6 V15.4" fill="#f0f0f0" stroke="#263238" stroke-width="1.1"/><path d="M16.3 23.6 V16 Q16.3 15.4 16.9 15.4 H24.2 Q24.8 15.4 24.8 16 V22 L22.4 23.7 H14.2 L16.3 21.6" fill="#f0f0f0" stroke="#263238" stroke-width="1.2" stroke-linejoin="round"/><path d="M16.3 17.5 H24.8" stroke="#263238" stroke-width="1.1"/><path d="M18.6 22.4 l0.8 -0.8 M20.6 22.4 l0.8 -0.8" stroke="#263238" stroke-width="0.8"/></svg>
<div class="t" style="left:450.00px;top:627.02px;font-size:11.5px;font-weight:normal;color:#000;transform:scaleX(1.0642);transform-origin:0 0;">Wood - Walnut Horizontal -opt.jpg</div>
<div class="btn" style="left:836px;top:626px;width:27px;height:20px"></div>
<svg style="left:830px;top:620px" width="30" height="30"><path d="M13.2 9.6 L24.6 22.4 M24.6 9.6 L13.2 22.4" stroke="#263238" stroke-width="1.8"/></svg>
<div class="btn" style="left:871px;top:626px;width:27px;height:20px"></div>
<svg style="left:870px;top:620px" width="30" height="30"><path d="M5.5 23.3 V12.4 Q5.5 11.9 6 11.9 H9 L13.8 14.6 H17.7 V18.2" fill="none" stroke="#263238" stroke-width="1.2"/><path d="M5.5 23.3 L10.6 18.2 H22.8 L18.5 23.3 Z" fill="none" stroke="#263238" stroke-width="1.2" stroke-linejoin="round"/><path d="M16.5 12.3 Q20 12.3 20.9 8.2" fill="none" stroke="#263238" stroke-width="1.1"/><path d="M19 9.6 L20.9 7.2 L22.8 9.6" fill="none" stroke="#263238" stroke-width="1.1"/></svg>
<div class="a" style="left:674px;top:654px;width:224px;height:1px;background:#a0a0a0"></div>
<div class="a" style="left:419px;top:653px;width:240px;height:175px;background:#fff;border-top:1px solid #a8a8a8;border-left:1px solid #a8a8a8;border-right:1px solid #fff;border-bottom:1px solid #fff;box-shadow:inset 1px 1px 0 #696969, inset -1px -1px 0 #e3e3e3"></div>
<svg style="left:458px;top:660px;overflow:hidden" width="161" height="161">
<defs>
<filter id="wgrain" x="0" y="0" width="100%" height="100%" color-interpolation-filters="sRGB">
<feTurbulence type="fractalNoise" baseFrequency="0.1 0.8" numOctaves="3" seed="11" result="fine"/>
<feTurbulence type="fractalNoise" baseFrequency="0.006 0.06" numOctaves="2" seed="3" result="coarse"/>
<feComposite in="fine" in2="coarse" operator="arithmetic" k1="0" k2="0.62" k3="0.4" k4="-0.01" result="mix"/>
<feColorMatrix in="mix" type="matrix" values="0.44 0 0 0 0.075  0.35 0 0 0 0.058  0.31 0 0 0 0.055  0 0 0 0 1"/>
</filter>
</defs>
<rect width="161" height="161" filter="url(#wgrain)"/>
</svg>
<svg style="left:682px;top:669px" width="20" height="22"><rect x="1.8" y="1.8" width="13.6" height="9.6" fill="#e8e8e8" stroke="#263238" stroke-width="1.6"/><path d="M3.2 4 Q6 6 3.5 9.5 M5.5 3 Q8 7 6 10.5 M8.5 3 Q9 5 11 4 M13.5 3.5 Q10.5 6.5 13 9.5 M9 10.6 Q10 8 10.5 6" fill="none" stroke="#263238" stroke-width="1"/><path d="M2 16.7 H15.5" stroke="#263238" stroke-width="1.3"/><path d="M4.2 14.6 L1.6 16.7 L4.2 18.8 M13.3 14.6 L15.9 16.7 L13.3 18.8" fill="none" stroke="#263238" stroke-width="1.3"/></svg>
<div class="fld" style="left:711px;top:665px;width:90px;height:23px"></div>
<div class="t" style="left:715.50px;top:669.72px;font-size:11.5px;font-weight:normal;color:#000;transform:scaleX(0.9555);transform-origin:0 0;">2.000</div>
<div class="t" style="left:835.80px;top:669.62px;font-size:11.5px;font-weight:normal;color:#000;transform:scaleX(0.9527);transform-origin:0 0;">1024 px</div>
<svg style="left:683px;top:703px" width="26" height="16"><rect x="1.8" y="1.8" width="13.6" height="9.6" fill="#e8e8e8" stroke="#263238" stroke-width="1.6"/><path d="M3.2 4 Q6 6 3.5 9.5 M5.5 3 Q8 7 6 10.5 M8.5 3 Q9 5 11 4 M13.5 3.5 Q10.5 6.5 13 9.5 M9 10.6 Q10 8 10.5 6" fill="none" stroke="#263238" stroke-width="1"/><path d="M20.5 1.5 V12.5" stroke="#263238" stroke-width="1.3"/><path d="M18.4 3.6 L20.5 1 L22.6 3.6 M18.4 10.4 L20.5 13 L22.6 10.4" fill="none" stroke="#263238" stroke-width="1.3"/></svg>
<div class="fld" style="left:711px;top:699px;width:90px;height:23px"></div>
<div class="t" style="left:715.50px;top:704.02px;font-size:11.5px;font-weight:normal;color:#000;transform:scaleX(0.9555);transform-origin:0 0;">2.000</div>
<div class="t" style="left:835.80px;top:704.02px;font-size:11.5px;font-weight:normal;color:#000;transform:scaleX(0.9527);transform-origin:0 0;">1024 px</div>
<div class="a" style="left:880px;top:666px;width:19px;height:56px;background:#cce4f7;border:1px solid #9dcdf3;border-right:0;border-radius:3px 0 0 3px"></div>
<svg style="left:880px;top:666px" width="19" height="56"><path d="M3.2 10 H10.6 V14.4 M3.2 46 H10.6 V41.5" fill="none" stroke="#263238" stroke-width="1.8"/><rect x="7.5" y="17.3" width="6.2" height="10" rx="2.2" fill="none" stroke="#263238" stroke-width="1.1"/><rect x="7.5" y="30.5" width="6.2" height="8.5" rx="2.2" fill="none" stroke="#263238" stroke-width="1.1"/><path d="M10.6 21 V34.5" stroke="#263238" stroke-width="1" stroke-dasharray="2 1.5"/></svg>
<svg style="left:674px;top:732px" width="36" height="28"><g transform="rotate(-28 17 11)"><rect x="10.8" y="6.8" width="13.6" height="9.6" fill="#e8e8e8" stroke="#263238" stroke-width="1.6"/><path d="M12.2 9 Q15 11 12.5 14.5 M14.5 8 Q17 12 15 15.5 M17.5 8 Q18 10 20 9 M22.5 8.5 Q19.5 11.5 22 14.5 M18 15.6 Q19 13 19.5 11" fill="none" stroke="#263238" stroke-width="1"/></g><path d="M2.5 24 L31 8.5" stroke="#263238" stroke-width="1" stroke-dasharray="2.2 1.6"/><path d="M2 24.5 H34" stroke="#263238" stroke-width="1" stroke-dasharray="2.2 1.6"/></svg>
<div class="t" style="left:699.00px;top:742.19px;font-size:11px;font-weight:normal;color:#263238;">α</div>
<div class="fld" style="left:711px;top:734px;width:90px;height:23px"></div>
<div class="t" style="left:715.50px;top:739.02px;font-size:11.5px;font-weight:normal;color:#000;transform:scaleX(0.9265);transform-origin:0 0;">0.00°</div>
<div class="a" style="left:675px;top:778px;width:12px;height:12px;background:#fdfdfd;border:1px solid #5a5a5a;border-radius:2px"></div>
<div class="t" style="left:690.70px;top:777.02px;font-size:11.5px;font-weight:normal;color:#000;transform:scaleX(1.0214);transform-origin:0 0;">Random Origin</div>
<div class="a" style="left:675px;top:803px;width:32px;height:25px;background:#cce4f7;border:1px solid #99c9f2;border-radius:3px"></div>
<svg style="left:680px;top:805px" width="22" height="22"><rect x="0.75" y="0.75" width="19.5" height="19.5" fill="#cfe6f8" stroke="#1e2a30" stroke-width="1.5"/><path d="M0.75 5.625 L5.625 0.75 M0.75 10.5 L10.5 0.75 M5.625 10.5 L10.5 5.625" stroke="#1e2a30" stroke-width="1"/><path d="M10.5 5.625 L15.375 0.75 M10.5 10.5 L20.25 0.75 M15.375 10.5 L20.25 5.625" stroke="#1e2a30" stroke-width="1"/><path d="M0.75 15.375 L5.625 10.5 M0.75 20.25 L10.5 10.5 M5.625 20.25 L10.5 15.375" stroke="#1e2a30" stroke-width="1"/><path d="M10.5 15.375 L15.375 10.5 M10.5 20.25 L20.25 10.5 M15.375 20.25 L20.25 15.375" stroke="#1e2a30" stroke-width="1"/><path d="M10.5 0.75 V20.25 M0.75 10.5 H20.25" stroke="#1e2a30" stroke-width="1.5"/></svg>
<svg style="left:713px;top:805px" width="22" height="22"><rect x="0.75" y="0.75" width="19.5" height="19.5" fill="#f4f4f4" stroke="#1e2a30" stroke-width="1.5"/><path d="M0.75 5.625 L5.625 0.75 M0.75 10.5 L10.5 0.75 M5.625 10.5 L10.5 5.625" stroke="#1e2a30" stroke-width="1"/><path d="M10.5 5.625 L15.375 10.5 M10.5 0.75 L20.25 10.5 M15.375 0.75 L20.25 5.625" stroke="#1e2a30" stroke-width="1"/><path d="M0.75 15.375 L5.625 10.5 M0.75 20.25 L10.5 10.5 M5.625 20.25 L10.5 15.375" stroke="#1e2a30" stroke-width="1"/><path d="M10.5 15.375 L15.375 20.25 M10.5 10.5 L20.25 20.25 M15.375 10.5 L20.25 15.375" stroke="#1e2a30" stroke-width="1"/><path d="M10.5 0.75 V20.25 M0.75 10.5 H20.25" stroke="#1e2a30" stroke-width="1.5"/></svg>
<svg style="left:746px;top:805px" width="22" height="22"><rect x="0.75" y="0.75" width="19.5" height="19.5" fill="#f4f4f4" stroke="#1e2a30" stroke-width="1.5"/><path d="M0.75 5.625 L5.625 0.75 M0.75 10.5 L10.5 0.75 M5.625 10.5 L10.5 5.625" stroke="#1e2a30" stroke-width="1"/><path d="M10.5 5.625 L15.375 0.75 M10.5 10.5 L20.25 0.75 M15.375 10.5 L20.25 5.625" stroke="#1e2a30" stroke-width="1"/><path d="M0.75 15.375 L5.625 20.25 M0.75 10.5 L10.5 20.25 M5.625 10.5 L10.5 15.375" stroke="#1e2a30" stroke-width="1"/><path d="M10.5 15.375 L15.375 20.25 M10.5 10.5 L20.25 20.25 M15.375 10.5 L20.25 15.375" stroke="#1e2a30" stroke-width="1"/><path d="M10.5 0.75 V20.25 M0.75 10.5 H20.25" stroke="#1e2a30" stroke-width="1.5"/></svg>
<svg style="left:779px;top:805px" width="22" height="22"><rect x="0.75" y="0.75" width="19.5" height="19.5" fill="#f4f4f4" stroke="#1e2a30" stroke-width="1.5"/><path d="M0.75 5.625 L5.625 0.75 M0.75 10.5 L10.5 0.75 M5.625 10.5 L10.5 5.625" stroke="#1e2a30" stroke-width="1"/><path d="M10.5 5.625 L15.375 10.5 M10.5 0.75 L20.25 10.5 M15.375 0.75 L20.25 5.625" stroke="#1e2a30" stroke-width="1"/><path d="M0.75 15.375 L5.625 20.25 M0.75 10.5 L10.5 20.25 M5.625 10.5 L10.5 15.375" stroke="#1e2a30" stroke-width="1"/><path d="M10.5 15.375 L15.375 10.5 M10.5 20.25 L20.25 10.5 M15.375 20.25 L20.25 15.375" stroke="#1e2a30" stroke-width="1"/><path d="M10.5 0.75 V20.25 M0.75 10.5 H20.25" stroke="#1e2a30" stroke-width="1.5"/></svg>
<div class="t" style="left:419.50px;top:839.02px;font-size:11.5px;font-weight:normal;color:#000;transform:scaleX(0.9600);transform-origin:0 0;">Sample:</div>
<div class="a" style="left:569px;top:834px;width:90px;height:23px;background:#fff;border:1px solid #7a7a7a;border-radius:2px"></div>
<div class="t" style="left:575.40px;top:839.02px;font-size:11.5px;font-weight:normal;color:#000;transform:scaleX(0.9166);transform-origin:0 0;">1x1</div>
<svg style="left:645px;top:843px" width="11" height="7"><path d="M0.5 0.8 L5 5.2 L9.5 0.8" fill="none" stroke="#444" stroke-width="0.9"/></svg>
<div class="btn" style="left:675px;top:836px;width:223px;height:20px"></div>
<div class="t" style="left:679.30px;top:838.52px;font-size:11.5px;font-weight:normal;color:#000;transform:scaleX(0.9948);transform-origin:0 0;">Alpha Channel Effects</div>
<svg style="left:890px;top:842px" width="5" height="8"><path d="M0 0 L4 3.6 L0 7.2 Z" fill="#333"/></svg>
<div class="a" style="left:419px;top:881px;width:479px;height:1px;background:#a0a0a0"></div>
<div class="btn" style="left:711px;top:894px;width:86px;height:21px"></div>
<div class="t" style="left:737.30px;top:897.72px;font-size:11.5px;font-weight:normal;color:#000;transform:scaleX(0.9634);transform-origin:0 0;">Cancel</div>
<div class="btn" style="left:810px;top:894px;width:88px;height:21px;border:1px solid #0067c0;border-radius:4px;box-shadow:inset 0 0 0 0.6px rgba(0,103,192,0.45)"></div>
<div class="t" style="left:846.20px;top:897.72px;font-size:11.5px;font-weight:normal;color:#000;transform:scaleX(0.9624);transform-origin:0 0;">OK</div>
<div class="a" style="left:908px;top:917px;width:2px;height:2px;background:#b0b0b0"></div>
<div class="a" style="left:905px;top:920px;width:2px;height:2px;background:#b0b0b0"></div>
<div class="a" style="left:908px;top:920px;width:2px;height:2px;background:#b0b0b0"></div>
<div class="a" style="left:902px;top:923px;width:2px;height:2px;background:#b0b0b0"></div>
<div class="a" style="left:905px;top:923px;width:2px;height:2px;background:#b0b0b0"></div>
<div class="a" style="left:908px;top:923px;width:2px;height:2px;background:#b0b0b0"></div>
</body></html>
